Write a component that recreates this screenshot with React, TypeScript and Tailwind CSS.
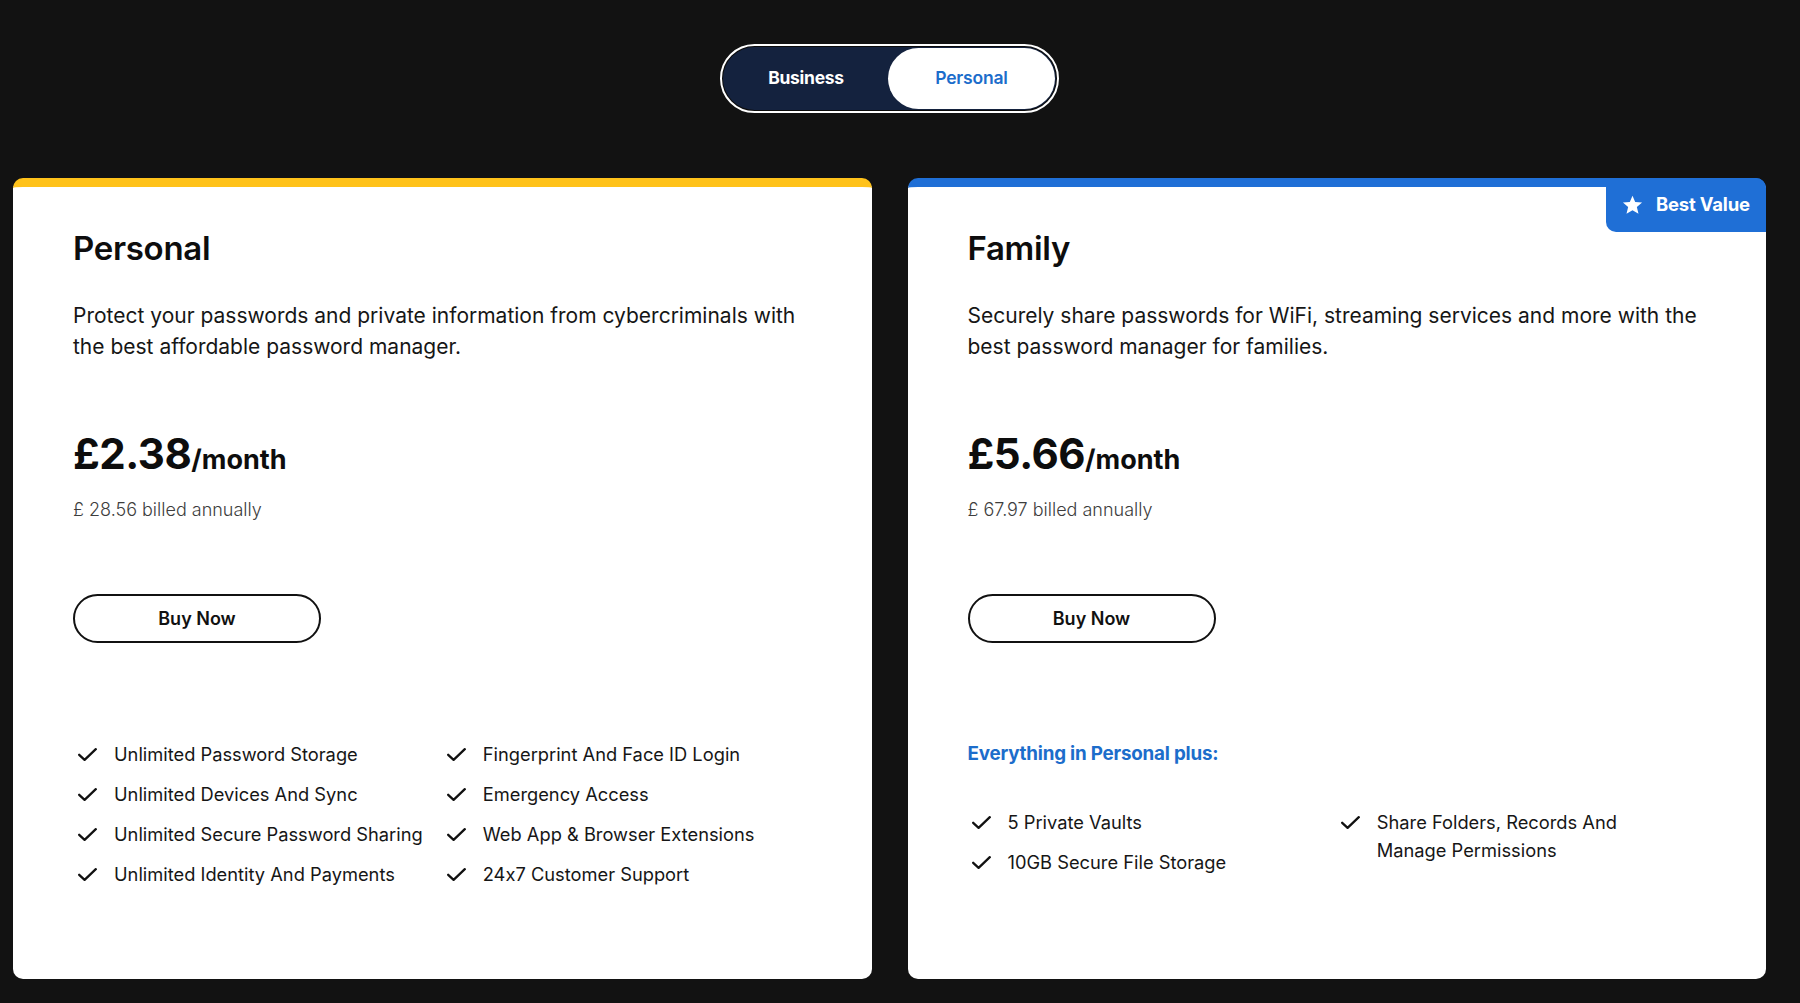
import React from "react";

const font = { fontFamily: "Inter, 'Noto Sans', sans-serif" };

function Check() {
  return (
    <svg width="19" height="13" viewBox="0 0 19 13" fill="none" className="shrink-0">
      <path d="M1.2 6.8 L6.6 11.8 L17.8 1.2" stroke="#111" strokeWidth="2.3" strokeLinecap="round" strokeLinejoin="round" />
    </svg>
  );
}

function Star() {
  return (
    <svg width="21" height="20" viewBox="0 0 24 23" fill="white">
      <path d="M12 0.8 L15.1 8 L23 8.6 L17 13.8 L18.9 21.6 L12 17.4 L5.1 21.6 L7 13.8 L1 8.6 L8.9 8 Z" />
    </svg>
  );
}

function Feature({ text }: { text: React.ReactNode }) {
  return (
    <div className="flex items-start gap-[17px]">
      <div className="h-[28px] flex items-center">
        <Check />
      </div>
      <span className="text-[18.3px] leading-[28px] text-[#161616] [font-feature-settings:'calt'_0]">{text}</span>
    </div>
  );
}

function Card({
  accent,
  title,
  desc,
  price,
  billed,
  badge,
  children,
}: {
  accent: string;
  title: string;
  desc: React.ReactNode;
  price: string;
  billed: string;
  badge?: boolean;
  children: React.ReactNode;
}) {
  return (
    <div
      className={`relative flex-1 h-[801px] bg-white rounded-[10px] border-t-[9px] ${accent} px-[60px] pt-[41px]`}
    >
      {badge && (
        <div className="absolute right-0 top-[-9px] h-[54px] w-[160px] bg-[#1f6fd6] rounded-tr-[10px] rounded-bl-[10px] flex items-center gap-[13px] pl-[16px]">
          <Star />
          <span className="text-white font-bold text-[18.5px] tracking-[-0.2px]">Best Value</span>
        </div>
      )}
      <h2 className="text-[33px] leading-[40px] font-semibold text-[#0d0d0d] tracking-[-0.3px]">{title}</h2>
      <p className="mt-[32px] text-[21px] leading-[31px] text-[#161616] whitespace-nowrap">{desc}</p>
      <div className="mt-[70px] flex items-baseline leading-[43px] text-[#0d0d0d] font-bold">
        <span className="text-[42px] tracking-[-0.5px]">{price}</span>
        <span className="text-[27px]">/month</span>
      </div>
      <div className="mt-[17px] text-[18px] leading-[24px] text-[#3d3d3d] font-light">{billed}</div>
      <button className="mt-[72px] w-[248px] h-[49px] rounded-full border-2 border-[#111] text-[18px] font-semibold text-[#111] flex items-center justify-center">
        Buy Now
      </button>
      <div className="mt-[97px]">{children}</div>
    </div>
  );
}

export default function App() {
  return (
    <div className="w-full h-[1003px] bg-[#121212] overflow-hidden" style={font}>
      <div className="w-[1779px] pl-[13px] pr-[13px] pt-[44px]">
        <div className="flex justify-center">
          <div className="w-[339px] h-[69px] rounded-full border-2 border-white bg-[#0c0c0c] p-[1px]">
            <div className="h-full w-full rounded-full bg-[#14223e] p-[1px] flex">
              <div className="w-[164px] flex items-center justify-center text-white font-bold text-[17.5px] tracking-[-0.3px]">
                Business
              </div>
              <div className="flex-1 rounded-full bg-white flex items-center justify-center text-[#1c6dcb] font-semibold text-[17.5px] tracking-[-0.2px]">
                Personal
              </div>
            </div>
          </div>
        </div>
        <div className="mt-[65px] flex gap-[36px]">
          <Card
            accent="border-[#ffc21a]"
            title="Personal"
            desc={
              <>
                Protect your passwords and private information from cybercriminals with
                <br />
                the best affordable password manager.
              </>
            }
            price="£2.38"
            billed="£ 28.56 billed annually"
          >
            <div className="grid grid-cols-2 pl-[5px]">
              <div className="flex flex-col gap-[12px]">
                <Feature text="Unlimited Password Storage" />
                <Feature text="Unlimited Devices And Sync" />
                <Feature text="Unlimited Secure Password Sharing" />
                <Feature text="Unlimited Identity And Payments" />
              </div>
              <div className="flex flex-col gap-[12px] pl-[2px]">
                <Feature text="Fingerprint And Face ID Login" />
                <Feature text="Emergency Access" />
                <Feature text="Web App & Browser Extensions" />
                <Feature text="24x7 Customer Support" />
              </div>
            </div>
          </Card>
          <Card
            accent="border-[#1f6fd6]"
            title="Family"
            desc={
              <>
                Securely share passwords for WiFi, streaming services and more with the
                <br />
                best password manager for families.
              </>
            }
            price="£5.66"
            billed="£ 67.97 billed annually"
            badge
          >
            <div className="text-[18.8px] leading-[28px] font-bold text-[#1c6dcb] tracking-[-0.2px]">
              Everything in Personal plus:
            </div>
            <div className="mt-[40px] grid grid-cols-2">
              <div className="flex flex-col gap-[12px] pl-[4px]">
                <Feature text="5 Private Vaults" />
                <Feature text="10GB Secure File Storage" />
              </div>
              <div className="pl-[4px] pr-[60px]">
                <Feature text="Share Folders, Records And Manage Permissions" />
              </div>
            </div>
          </Card>
        </div>
      </div>
    </div>
  );
}
